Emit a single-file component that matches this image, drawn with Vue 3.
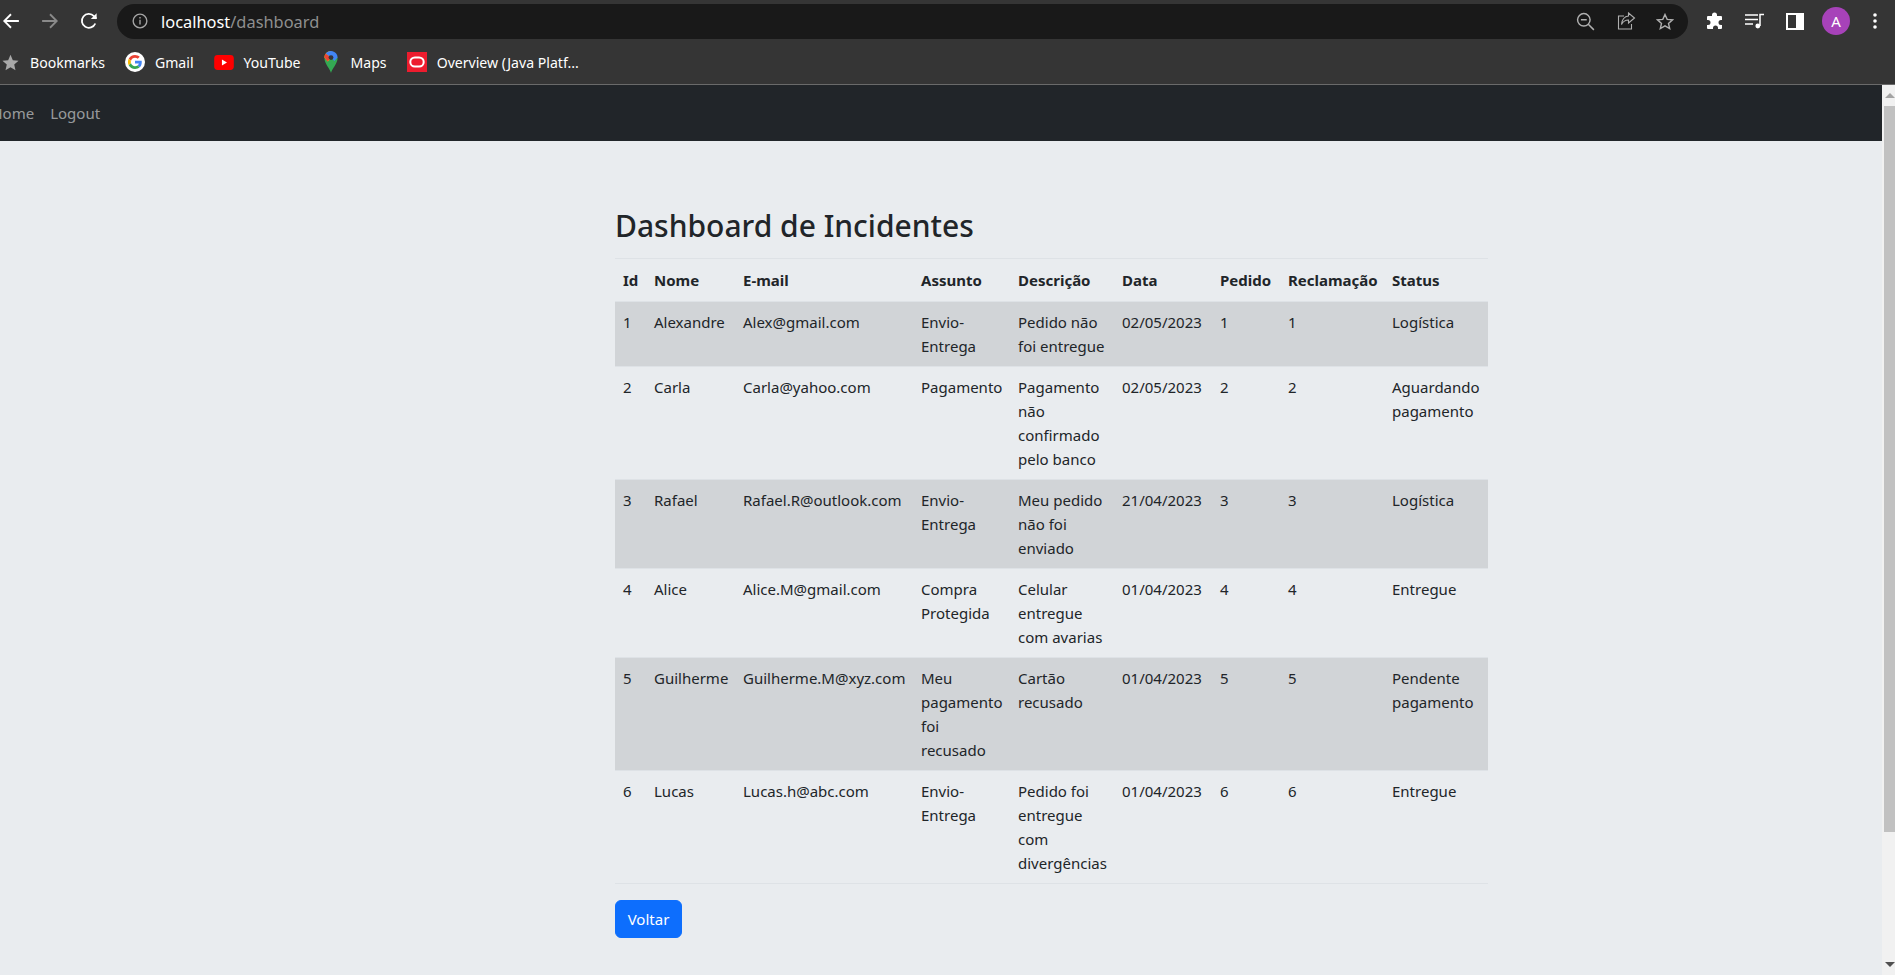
<script setup>
const bookmarks = [
  { name: 'Bookmarks', icon: 'star' },
  { name: 'Gmail', icon: 'google' },
  { name: 'YouTube', icon: 'youtube' },
  { name: 'Maps', icon: 'maps' },
  { name: 'Overview (Java Platf...', icon: 'oracle' },
]

const columns = ['Id', 'Nome', 'E-mail', 'Assunto', 'Descrição', 'Data', 'Pedido', 'Reclamação', 'Status']
const widths = [31, 89, 178, 97, 104, 98, 68, 104, 104]

const rows = [
  ['1', 'Alexandre', 'Alex@gmail.com', 'Envio-\nEntrega', 'Pedido não\nfoi entregue', '02/05/2023', '1', '1', 'Logística'],
  ['2', 'Carla', 'Carla@yahoo.com', 'Pagamento', 'Pagamento\nnão\nconfirmado\npelo banco', '02/05/2023', '2', '2', 'Aguardando\npagamento'],
  ['3', 'Rafael', 'Rafael.R@outlook.com', 'Envio-\nEntrega', 'Meu pedido\nnão foi\nenviado', '21/04/2023', '3', '3', 'Logística'],
  ['4', 'Alice', 'Alice.M@gmail.com', 'Compra\nProtegida', 'Celular\nentregue\ncom avarias', '01/04/2023', '4', '4', 'Entregue'],
  ['5', 'Guilherme', 'Guilherme.M@xyz.com', 'Meu\npagamento\nfoi\nrecusado', 'Cartão\nrecusado', '01/04/2023', '5', '5', 'Pendente\npagamento'],
  ['6', 'Lucas', 'Lucas.h@abc.com', 'Envio-\nEntrega', 'Pedido foi\nentregue\ncom\ndivergências', '01/04/2023', '6', '6', 'Entregue'],
]
</script>

<template>
  <div class="window">
    <header class="browser">
      <div class="toolbar">
        <svg class="nav-icon first" width="18" height="18" viewBox="0 0 16 16" fill="none" stroke="#fff" stroke-width="1.6">
          <path d="M15 8H2M8 2L2 8l6 6" />
        </svg>
        <svg class="nav-icon" width="18" height="18" viewBox="0 0 16 16" fill="none" stroke="#8a8a8a" stroke-width="1.6">
          <path d="M1 8h13M8 2l6 6-6 6" />
        </svg>
        <svg class="nav-icon" width="18" height="18" viewBox="0 0 16 16" fill="none" stroke="#fff" stroke-width="1.6">
          <path d="M13.6 10.2A6.2 6.2 0 1 1 12.4 3.6L14.6 5.8" />
          <path d="M14.8 1v5.2H9.600" fill="#fff" stroke="none" />
        </svg>

        <div class="omnibox">
          <svg class="info" width="16" height="16" viewBox="0 0 14 14" fill="none" stroke="#a5a5a5" stroke-width="1.2">
            <circle cx="7" cy="7" r="6" />
            <path d="M7 6v4M7 3.6v1.3" />
          </svg>
          <span class="url"><b>localhost</b>/dashboard</span>
          <span class="spacer"></span>
          <svg class="zoom-out" width="19" height="19" viewBox="0 0 17 17" fill="none" stroke="#b0b0b0" stroke-width="1.3">
            <circle cx="7" cy="7" r="5.600" />
            <path d="M4.400 7h5.200M11 11l5 5" />
          </svg>
          <svg class="share" width="19" height="18" viewBox="0 0 19 18" fill="none" stroke="#b0b0b0" stroke-width="1.1">
            <path d="M7 4H1.500v13h13v-5" />
            <path d="M11.500 1l6 5-6 5V8C8 8 6 9.500 4.500 12.500 5 7.500 7.500 4.500 11.500 4z" />
          </svg>
          <svg width="18" height="17" viewBox="0 0 18 17" fill="none" stroke="#b0b0b0" stroke-width="1.4">
            <path d="M9 1.500l2.200 4.900 5.300.5-4 3.500 1.200 5.200L9 12.900l-4.700 2.700 1.200-5.200-4-3.500 5.300-.5z" />
          </svg>
        </div>

        <div class="actions">
          <svg width="19" height="18" viewBox="0 0 19 18" fill="#fff">
            <path d="M7 3a2.500 2.500 0 0 1 5 0v1h4a1 1 0 0 1 1 1v3h-1a2.500 2.500 0 0 0 0 5h1v3a1 1 0 0 1-1 1h-3v-1a2.500 2.500 0 0 0-5 0v1H3a1 1 0 0 1-1-1v-3h1a2.500 2.500 0 0 0 0-5H2V5a1 1 0 0 1 1-1h4z" />
          </svg>
          <svg width="20" height="16" viewBox="0 0 20 16" fill="none" stroke="#fff" stroke-width="1.500">
            <path d="M0 2h13M0 6.500h13M0 11h8" />
            <path d="M15 13V1.500h4" />
            <circle cx="12.800" cy="13" r="2.400" fill="#fff" stroke="none" />
          </svg>
          <svg width="18" height="17" viewBox="0 0 18 17">
            <path fill="#fff" fill-rule="evenodd" d="M0 0h18v17H0zM2 2v13h8V2z" />
          </svg>
          <span class="avatar">A</span>
          <svg class="dots" width="4" height="16" viewBox="0 0 4 16" fill="#fff">
            <circle cx="2" cy="2" r="1.800" />
            <circle cx="2" cy="8" r="1.800" />
            <circle cx="2" cy="14" r="1.800" />
          </svg>
        </div>
      </div>

      <div class="bookmarks">
        <div v-for="item in bookmarks" :key="item.name" class="bookmark">
          <span class="bm-icon">
            <svg v-if="item.icon === 'star'" width="17" height="17" viewBox="0 0 16 16" fill="#a8a8a8">
              <path d="M8 .8l2.200 5 5.400.5-4.100 3.600 1.200 5.300L8 12.400l-4.700 2.800 1.200-5.300L.4 6.300l5.400-.5z" />
            </svg>
            <svg v-else-if="item.icon === 'google'" width="20" height="20" viewBox="-10 -10 68 68">
              <circle cx="24" cy="24" r="34" fill="#fff" />
              <path fill="#EA4335" d="M24 9.500c3.540 0 6.710 1.220 9.210 3.600l6.850-6.850C35.900 2.380 30.470 0 24 0 14.620 0 6.510 5.380 2.560 13.220l7.980 6.190C12.430 13.720 17.740 9.500 24 9.500z" />
              <path fill="#4285F4" d="M46.980 24.550c0-1.570-.15-3.090-.38-4.550H24v9.020h12.940c-.58 2.960-2.260 5.480-4.780 7.180l7.730 6c4.510-4.180 7.090-10.360 7.090-17.650z" />
              <path fill="#FBBC05" d="M10.530 28.590c-.48-1.450-.76-2.990-.76-4.590s.27-3.140.76-4.590l-7.980-6.190C.92 16.460 0 20.120 0 24c0 3.880.92 7.540 2.560 10.780l7.970-6.190z" />
              <path fill="#34A853" d="M24 48c6.480 0 11.930-2.130 15.890-5.810l-7.730-6c-2.150 1.450-4.920 2.300-8.160 2.300-6.260 0-11.570-4.220-13.470-9.910l-7.980 6.190C6.510 42.620 14.620 48 24 48z" />
            </svg>
            <svg v-else-if="item.icon === 'youtube'" width="20" height="15" viewBox="0 0 17 13">
              <rect width="17" height="13" rx="3" fill="#f00" />
              <path d="M6.700 3.800v5.400l4.400-2.700z" fill="#fff" />
            </svg>
            <svg v-else-if="item.icon === 'maps'" width="14" height="22" viewBox="0 0 12 20">
              <path d="M6 20C5 16 0 12 0 6h12c0 6-5 10-6 14z" fill="#34a853" />
              <path d="M0 6l3 3.500 4-3.500-1-6C2.500 0 0 2.700 0 6z" fill="#fbbc05" />
              <path d="M6 0c-2 0-3.800 1-4.800 2.400L6 6l3-2V1C8 .3 7 0 6 0z" fill="#4285f4" />
              <path d="M1.200 2.400A6 6 0 0 0 0 6l3 3.500L6 6z" fill="#ea4335" />
              <path d="M9 1a6 6 0 0 1 3 5l-3 3-3-3z" fill="#4285f4" />
              <circle cx="6" cy="6" r="2.200" fill="#35363a" />
            </svg>
            <svg v-else width="20" height="20" viewBox="0 0 17 17">
              <rect width="17" height="17" fill="#ed1c2e" />
              <rect x="2.800" y="4.600" width="11.400" height="7.800" rx="3.900" fill="none" stroke="#fff" stroke-width="1.700" />
            </svg>
          </span>
          <span>{{ item.name }}</span>
        </div>
      </div>
    </header>

    <div class="viewport">
      <div class="page">
        <nav class="navbar">
          <a class="nav-link home">Home</a>
          <a class="nav-link">Logout</a>
        </nav>

        <main class="content">
          <h2 class="title">Dashboard de Incidentes</h2>
          <table class="incidents">
            <colgroup>
              <col v-for="(w, i) in widths" :key="i" :style="{ width: w + 'px' }" />
            </colgroup>
            <thead>
              <tr>
                <th v-for="col in columns" :key="col">{{ col }}</th>
              </tr>
            </thead>
            <tbody>
              <tr v-for="row in rows" :key="row[0]">
                <td v-for="(cell, i) in row" :key="i">{{ cell }}</td>
              </tr>
            </tbody>
          </table>
          <button class="btn">Voltar</button>
        </main>
      </div>

      <aside class="scrollbar">
        <span class="arrow up"></span>
        <span class="thumb"></span>
        <span class="arrow down"></span>
      </aside>
    </div>
  </div>
</template>

<style scoped>
.window {
  height: 975px;
  display: flex;
  flex-direction: column;
  overflow: hidden;
  font-family: "Noto Sans", "Open Sans", sans-serif;
  color: #212529;
}

.browser {
  height: 85px;
  flex: none;
  background: #353535;
  border-bottom: 1px solid #6a6a6a;
  box-sizing: border-box;
  color: #fff;
}

.toolbar {
  height: 42px;
  display: flex;
  align-items: center;
}

.nav-icon {
  margin-right: 21px;
}

.nav-icon.first {
  margin-left: 2px;
}

.omnibox {
  width: 1571px;
  height: 35px;
  margin-left: -2px;
  border-radius: 18px;
  background: #191919;
  display: flex;
  align-items: center;
  padding: 0 14px 0 15px;
  box-sizing: border-box;
}

.url {
  margin-left: 13px;
  font-size: 16.4px;
  color: #8f8f8f;
}

.url b {
  font-weight: 400;
  color: #fff;
}

.spacer {
  flex: 1;
}

.share {
  margin: 0 20px 0 22px;
}

.actions {
  display: flex;
  align-items: center;
  gap: 21px;
  margin-left: 17px;
}

.avatar {
  width: 28px;
  height: 28px;
  margin-left: -3px;
  border-radius: 50%;
  background: #a742b9;
  display: flex;
  align-items: center;
  justify-content: center;
  font-size: 15px;
}

.dots {
  margin-left: 2px;
}

.bookmarks {
  height: 40px;
  display: flex;
  align-items: center;
  gap: 20px;
  font-size: 14.1px;
}

.bookmark {
  display: flex;
  align-items: center;
  gap: 10px;
}

.bm-icon {
  width: 20px;
  height: 22px;
  display: flex;
  align-items: center;
  justify-content: center;
}

.viewport {
  flex: 1;
  display: flex;
  min-height: 0;
}

.page {
  flex: 1;
  min-width: 0;
  background: #e9ecef;
}

.navbar {
  height: 56px;
  background: #212529;
  display: flex;
  align-items: center;
  gap: 16px;
  overflow: hidden;
}

.nav-link {
  font-size: 15px;
  color: rgba(255, 255, 255, 0.55);
}

.home {
  margin-left: -8.5px;
}

.content {
  padding: 66px 0 0 615px;
}

.title {
  margin: 0 0 13px;
  font-size: 30px;
  font-weight: 500;
  line-height: 38.4px;
  color: #212529;
}

.incidents {
  width: 873px;
  table-layout: fixed;
  border-collapse: collapse;
  font-size: 15px;
  line-height: 24px;
}

.incidents th,
.incidents td {
  padding: 8px;
  text-align: left;
  vertical-align: top;
  white-space: pre;
  border-top: 1px solid #dee2e6;
  border-bottom: 1px solid #dee2e6;
}

.incidents th {
  padding: 9px 8px;
  font-weight: 700;
}

.incidents tbody tr:nth-child(odd) {
  background: #d1d4d7;
}

.btn {
  display: block;
  width: 67px;
  height: 38px;
  margin-top: 16px;
  padding: 0;
  border: 1px solid #0d6efd;
  border-radius: 6px;
  background: #0d6efd;
  color: #fff;
  font: inherit;
  font-size: 15px;
}

.scrollbar {
  width: 13px;
  flex: none;
  background: #f1f1f1;
  display: flex;
  flex-direction: column;
  align-items: flex-end;
}

.thumb {
  width: 11px;
  height: 726px;
  background: #c1c1c1;
}

.arrow {
  width: 11px;
  height: 21px;
  display: flex;
  justify-content: center;
}

.arrow::before {
  content: "";
  width: 0;
  height: 0;
  border-left: 5px solid transparent;
  border-right: 5px solid transparent;
  margin-top: 8px;
}

.up::before {
  border-bottom: 5px solid #a3a3a3;
}

.down {
  margin-top: auto;
}

.down::before {
  border-top: 5px solid #505050;
}
</style>

<style>
html,
body {
  margin: 0;
  overflow: hidden;
}
</style>
